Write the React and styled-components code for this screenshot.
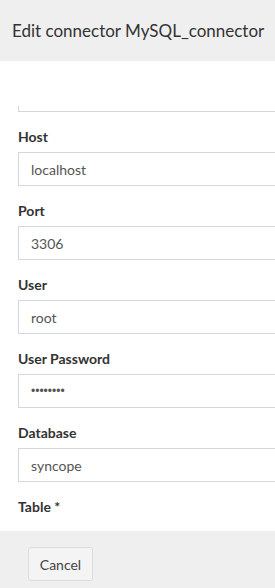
import React, { useLayoutEffect, useRef } from 'react'
import styled, { createGlobalStyle } from 'styled-components'

const fields = [
  { label: 'JDBC Connection URL', value: 'jdbc:mysql://localhost:3306/syncope' },
  { label: 'Host', value: 'localhost' },
  { label: 'Port', value: '3306' },
  { label: 'User', value: 'root' },
  { label: 'User Password', value: 'password', type: 'password' },
  { label: 'Database', value: 'syncope' },
  { label: 'Table *', value: 'testpull' },
  { label: 'Key Column', value: 'id' },
]

function App() {
  const scroller = useRef(null)

  useLayoutEffect(() => {
    if (scroller.current) scroller.current.scrollTop = 53
  }, [])

  return (
    <>
      <GlobalStyle />
      <Modal>
        <Header>
          <Title>Edit connector MySQL_connector</Title>
        </Header>
        <Body>
          <Scroller ref={scroller}>
            {fields.map((f) => (
              <Field key={f.label}>
                <Label>{f.label}</Label>
                <Input
                  type={f.type || 'text'}
                  $secret={f.type === 'password'}
                  defaultValue={f.value}
                  readOnly
                />
              </Field>
            ))}
          </Scroller>
        </Body>
        <Footer>
          <Button>Cancel</Button>
        </Footer>
      </Modal>
    </>
  )
}

export default App

const GlobalStyle = createGlobalStyle`
  html, body {
    margin: 0;
    padding: 0;
    height: 100%;
    overflow: hidden;
    background: #ffffff;
  }
  body {
    font-family: "Lato", "Liberation Sans", sans-serif;
    color: #333333;
  }
`

const Modal = styled.div`
  width: 600px;
  height: 588px;
  display: flex;
  flex-direction: column;
`

const Header = styled.div`
  height: 61px;
  flex: none;
  background: #efefef;
  display: flex;
  align-items: center;
  padding: 0 12px;
  box-sizing: border-box;
`

const Title = styled.h4`
  margin: 0;
  font-size: 17px;
  font-weight: 400;
  color: #333333;
`

const Body = styled.div`
  flex: 1;
  min-height: 0;
  background: #ffffff;
  padding: 45px 0 15px 18px;
  box-sizing: border-box;
  display: flex;
  flex-direction: column;
`

const Scroller = styled.div`
  flex: 1;
  min-height: 0;
  overflow: hidden;
`

const Field = styled.div`
  margin-bottom: 15px;
`

const Label = styled.label`
  display: block;
  font-size: 14px;
  line-height: 20px;
  font-weight: 700;
  color: #333333;
  margin-bottom: 5px;
`

const Input = styled.input`
  display: block;
  width: 100%;
  height: 34px;
  box-sizing: border-box;
  border: 1px solid #d2d6de;
  border-radius: 0;
  padding: 6px 12px;
  font-family: ${(p) => (p.$secret ? '"Liberation Sans", sans-serif' : 'inherit')};
  font-size: ${(p) => (p.$secret ? '12px' : '14px')};
  color: #555555;
  background: #ffffff;
  outline: none;
`

const Footer = styled.div`
  height: 57px;
  flex: none;
  background: #efefef;
  padding: 16px 28px 0;
  box-sizing: border-box;
`

const Button = styled.button`
  width: 65px;
  height: 34px;
  background: #f4f4f4;
  border: 1px solid #dddddd;
  border-radius: 3px;
  font-family: inherit;
  font-size: 14px;
  color: #444444;
  padding: 0;
`
